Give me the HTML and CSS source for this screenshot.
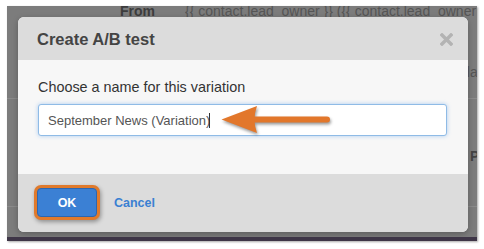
FILE: index.html
```html
<!DOCTYPE html>
<html lang="en">
<head>
  <meta charset="UTF-8" />
  <title>Create A/B test</title>
  <link rel="stylesheet" href="styles.css">
</head>
<body>

<div class="screen">
  <!-- page behind the modal -->
  <div class="page">
    <div class="row row-from">
      <span class="row-label">From</span>
      <span class="row-value">{{ contact.lead_owner }} ({{ contact.lead_owner }})</span>
    </div>
    <div class="row row-plain">plain</div>
    <div class="row row-p">P</div>
  </div>

  <div class="modal">
    <div class="modal-header">
      <h3>Create A/B test</h3>
      <svg class="close" width="13" height="13" viewBox="0 0 13 13">
        <path d="M2 2 L11 11 M11 2 L2 11" stroke="#b3b3b3" stroke-width="3.4" stroke-linecap="square" fill="none"/>
      </svg>
    </div>

    <div class="modal-body">
      <label for="variation">Choose a name for this variation</label>
      <div class="field">
        <input id="variation" type="text" value="September News (Variation)" />
        <span class="caret"></span>
        <svg class="arrow" width="116" height="36" viewBox="0 0 116 36">
          <line x1="34" y1="17.5" x2="108" y2="17.5" stroke="#e2772b" stroke-width="6" stroke-linecap="round"/>
          <path d="M2.5 17.5 L38 4 Q33 17.5 38 31 Z" fill="#e2772b"/>
        </svg>
      </div>
    </div>

    <div class="modal-footer">
      <button type="button" class="btn-ok">OK</button>
      <a href="#" class="cancel">Cancel</a>
    </div>
  </div>
</div>

</body>
</html>
```

FILE: styles.css
```css
* {
  box-sizing: border-box;
}

body {
  margin: 0;
  background: #fff;
  font-family: "Liberation Sans", Arial, sans-serif;
}

.screen {
  position: relative;
  margin: 6px 7px 8px 7px;
  height: 235px;
  background: #7c7c7c;
  border-bottom: 4px solid #3e3547;
  overflow: hidden;
  box-shadow: 1px 1px 2px rgba(0,0,0,0.35);
}

/* page behind */
.page {
  font-size: 14px;
  line-height: 20px;
  color: #555;
  white-space: nowrap;
}

.row-from {
  margin-top: -5px;
  height: 20px;
  display: flex;
}

.row-label {
  flex: none;
  width: 178px;
  padding-left: 113px;
  font-weight: bold;
  color: #3d3d3d;
}

.row-value {
  overflow: hidden;
}

.row-plain {
  margin-top: 41px;
  height: 37px;
  padding-left: 452px;
  border-bottom: 1px solid #8b8b8b;
}

.row-p {
  height: 108px;
  padding-top: 47px;
  padding-left: 463px;
  font-weight: bold;
  color: #444;
  border-bottom: 1px solid #8b8b8b;
}

/* modal */
.modal {
  position: absolute;
  left: 11px;
  top: 11px;
  width: 450px;
  border-radius: 6px;
  overflow: hidden;
  background: #f7f7f7;
  box-shadow: 0 2px 6px rgba(0,0,0,0.25);
}

.modal-header {
  display: flex;
  justify-content: space-between;
  align-items: center;
  height: 43px;
  padding: 0 15px 0 19px;
  background: #dcdcdc;
}

.modal-header h3 {
  margin: 0;
  font-size: 16.5px;
  line-height: 20px;
  color: #444;
  font-weight: bold;
}

.close {
  margin-top: 1px;
}

.modal-body {
  padding: 17px 21px 38px 20px;
}

.modal-body label {
  display: block;
  font-size: 14.4px;
  line-height: 20px;
  color: #333;
  margin-bottom: 7px;
}

.field {
  position: relative;
}

.field input {
  display: block;
  width: 100%;
  height: 32px;
  padding: 0 9px;
  margin: 0;
  font-family: "Liberation Sans", Arial, sans-serif;
  font-size: 13px;
  color: #555;
  background: #fff;
  border: 1px solid #8fbbe6;
  border-radius: 3px;
  outline: none;
  box-shadow: 0 0 4px rgba(82,150,230,0.45);
}

.caret {
  position: absolute;
  left: 171px;
  top: 9px;
  width: 1px;
  height: 15px;
  background: #333;
}

.arrow {
  position: absolute;
  left: 181px;
  top: -2px;
  filter: drop-shadow(1px 2px 1.5px rgba(0,0,0,0.4));
}

.modal-footer {
  display: flex;
  align-items: center;
  gap: 17px;
  height: 58px;
  padding: 0 19px;
  background: #dcdcdc;
}

.btn-ok {
  width: 60px;
  height: 29px;
  padding: 0;
  margin-top: -1px;
  font-family: "Liberation Sans", Arial, sans-serif;
  font-size: 12.5px;
  font-weight: bold;
  color: #fff;
  background: #3b80d4;
  border: 1px solid #2d66ae;
  border-radius: 4px;
  box-shadow: 0 0 0 3px #e07a2c, 1px 2px 4px 3px rgba(0,0,0,0.35);
  cursor: pointer;
}

.cancel {
  font-size: 12.5px;
  font-weight: bold;
  color: #3a80d2;
  text-decoration: none;
}
```
